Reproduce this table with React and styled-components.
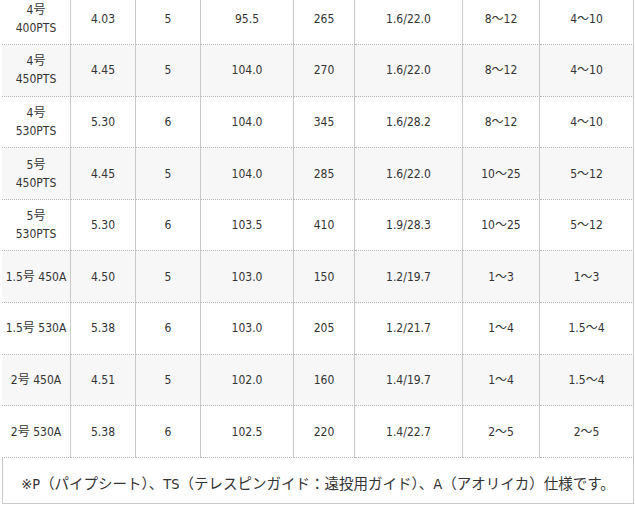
import React from "react";
import styled, { createGlobalStyle } from "styled-components";

const GlobalStyle = createGlobalStyle`
  html, body {
    margin: 0;
    padding: 0;
    background: #ffffff;
  }
  body {
    font-family: "DejaVu Sans Condensed", "DejaVu Sans", "Noto Sans CJK JP", sans-serif;
    color: #333333;
  }
`;

const Viewport = styled.div`
  width: 635px;
  height: 506px;
  overflow: hidden;
`;

const Table = styled.table`
  width: 632px;
  margin: -6.5px 0 0 2px;
  border-collapse: separate;
  border-spacing: 0;
  table-layout: fixed;
  font-family: "DejaVu Sans Condensed", "DejaVu Sans", "Noto Sans CJK JP", sans-serif;
  font-size: 12px;
  color: #333333;
`;

const Row = styled.tr`
  background: ${(p) => (p.$shaded ? "#f7f7f7" : "#ffffff")};
`;

const Cell = styled.td`
  box-sizing: border-box;
  width: ${(p) => p.$w}px;
  height: 51.6px;
  padding: 0 2px;
  text-align: center;
  vertical-align: middle;
  line-height: 18px;
  white-space: pre-line;
  border-right: 1px solid #c9c9c9;
  border-bottom: 1px dotted #b5b5b5;
`;

const NoteCell = styled.td`
  box-sizing: border-box;
  height: 46.4px;
  padding: 7px 0 0 0;
  text-align: center;
  vertical-align: middle;
  font-size: 14.5px;
  line-height: 20px;
  color: #333333;
  font-family: "DejaVu Sans Condensed", "DejaVu Sans", "Noto Sans CJK JP", sans-serif;
  border-left: 1px solid #c9c9c9;
  border-right: 1px solid #c9c9c9;
  border-bottom: 1px solid #c9c9c9;
`;

const widths = [69, 65, 65, 93, 61, 108, 77, 94];

const rows = [
  ["4号\n400PTS", "4.03", "5", "95.5", "265", "1.6/22.0", "8～12", "4～10"],
  ["4号\n450PTS", "4.45", "5", "104.0", "270", "1.6/22.0", "8～12", "4～10"],
  ["4号\n530PTS", "5.30", "6", "104.0", "345", "1.6/28.2", "8～12", "4～10"],
  ["5号\n450PTS", "4.45", "5", "104.0", "285", "1.6/22.0", "10～25", "5～12"],
  ["5号\n530PTS", "5.30", "6", "103.5", "410", "1.9/28.3", "10～25", "5～12"],
  ["1.5号 450A", "4.50", "5", "103.0", "150", "1.2/19.7", "1～3", "1～3"],
  ["1.5号 530A", "5.38", "6", "103.0", "205", "1.2/21.7", "1～4", "1.5～4"],
  ["2号 450A", "4.51", "5", "102.0", "160", "1.4/19.7", "1～4", "1.5～4"],
  ["2号 530A", "5.38", "6", "102.5", "220", "1.4/22.7", "2～5", "2～5"],
];

export default function App() {
  return (
    <>
      <GlobalStyle />
      <Viewport>
        <Table>
          <tbody>
            {rows.map((r, i) => (
              <Row key={i} $shaded={i % 2 === 1}>
                {r.map((c, j) => (
                  <Cell key={j} $w={widths[j]}>
                    {c}
                  </Cell>
                ))}
              </Row>
            ))}
            <tr>
              <NoteCell colSpan={8}>
                ※P（パイプシート）、TS（テレスピンガイド：遠投用ガイド）、A（アオリイカ）仕様です。
              </NoteCell>
            </tr>
          </tbody>
        </Table>
      </Viewport>
    </>
  );
}
